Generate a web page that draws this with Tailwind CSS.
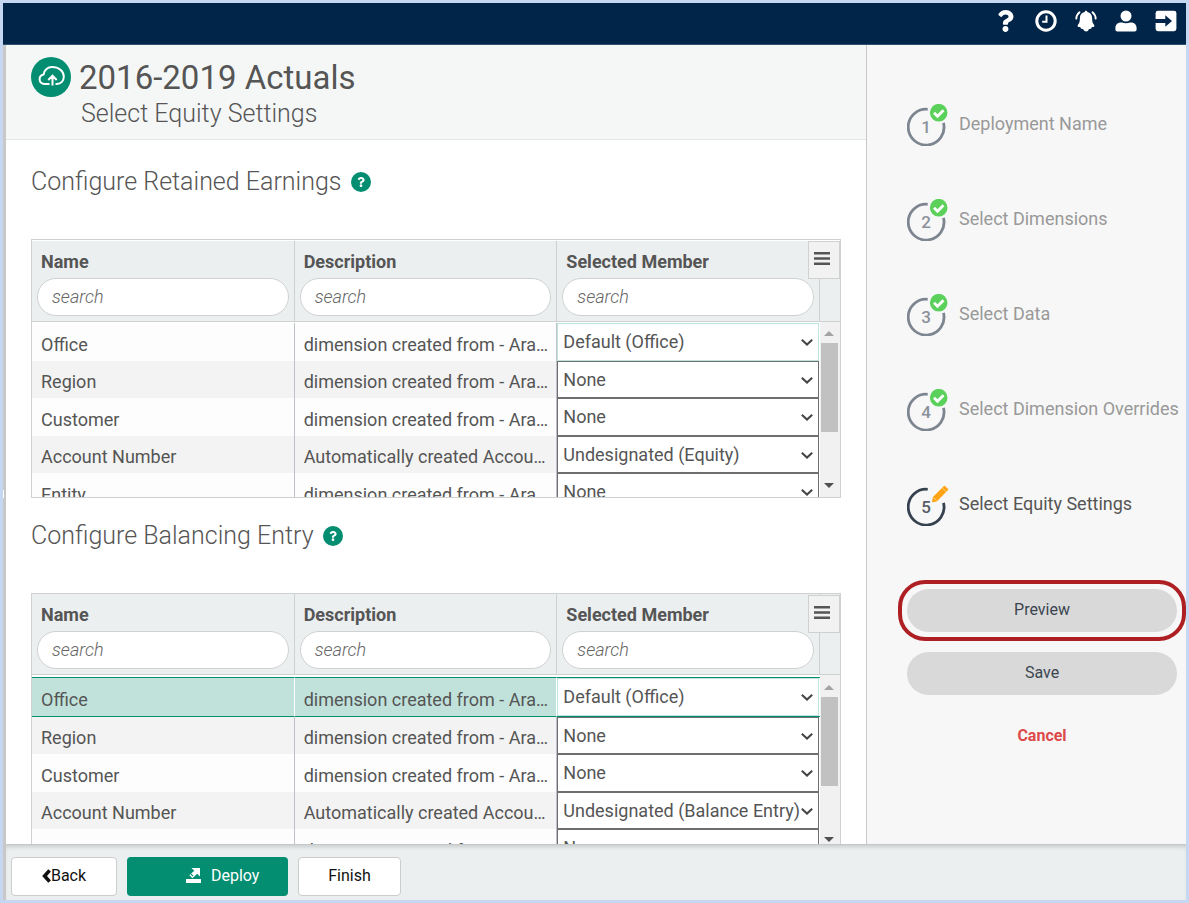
<!DOCTYPE html>
<html lang="en">
<head>
    <meta charset="UTF-8">
    <meta name="viewport" content="width=device-width, initial-scale=1.0">
    <title>2016-2019 Actuals - Select Equity Settings</title>
    <script src="https://cdn.jsdelivr.net/npm/@tailwindcss/browser@4"></script>
</head>
<body class="h-screen flex flex-col overflow-hidden border-3 border-[#c6d8f1] bg-white font-['Roboto',sans-serif] text-[#555]">
    <header class="h-[42px] shrink-0 flex items-center justify-end gap-[18px] pr-[9px] pb-1.5 bg-[#002548] border-b border-[#2f5170] text-white">
        <button type="button" aria-label="Help">
            <svg class="size-[22px]" viewBox="-52 0 512 512" fill="currentColor"><path d="M202.021 0C122.202 0 70.503 32.703 29.914 91.026c-7.363 10.58-5.093 25.086 5.178 32.874l43.138 32.709c10.373 7.865 25.132 6.026 33.253-4.148 25.049-31.381 43.63-49.449 82.757-49.449 30.764 0 68.816 19.799 68.816 49.631 0 22.552-18.617 34.134-48.993 51.164-35.423 19.86-82.299 44.576-82.299 106.405V320c0 13.255 10.745 24 24 24h72.471c13.255 0 24-10.745 24-24v-5.773c0-42.86 125.268-44.645 125.268-160.627C377.504 66.256 286.902 0 202.021 0zM192 373.459c-38.196 0-69.271 31.075-69.271 69.271 0 38.195 31.075 69.27 69.271 69.27s69.271-31.075 69.271-69.271-31.075-69.27-69.271-69.27z"/></svg>
        </button>
        <button type="button" aria-label="History">
            <svg class="size-[22px]" viewBox="0 0 22 22" fill="none" stroke="currentColor"><circle cx="11" cy="11" r="9.2" stroke-width="3"/><path d="M11.500 5.500v6.200H7.200" stroke-width="2"/></svg>
        </button>
        <button type="button" aria-label="Notifications">
            <svg class="size-[22px]" viewBox="0 0 22 22" fill="currentColor"><path d="M11 .8c.8 0 1.300.5 1.300 1.200 3 .6 4.800 2.700 4.800 5.900 0 3.600.6 5.300 1.800 6.500 1 1.100.4 2.700-1 2.700h-1c-.2 1.200-1 2-2.200 1.900h-.8c-.2 1.500-1.300 2.500-2.700 2.500s-2.800-1-3-2.500h-.8c-1.200.1-1.900-.7-2.100-1.900h-1.200c-1.400 0-2-1.600-1-2.700 1.200-1.200 1.800-2.900 1.800-6.500 0-3.200 1.800-5.300 4.800-5.900 0-.7.5-1.200 1.300-1.200z"/><path d="M4.500 2.300C2.500 4 1.400 6 1.300 8.600M17.500 2.300c2 1.700 3.100 3.700 3.200 6.300" fill="none" stroke="currentColor" stroke-width="1.900" stroke-linecap="round"/></svg>
        </button>
        <button type="button" aria-label="Account">
            <svg class="size-[22px]" viewBox="0 0 22 22" fill="currentColor"><circle cx="11" cy="6" r="5.500"/><path d="M.4 19.500v-1.600c0-3.200 2.400-5.400 5.600-5.400h1c2.500 1.100 5.500 1.100 8 0h1c3.200 0 5.600 2.200 5.600 5.400v1.600c0 1.200-.8 2-2 2H2.400c-1.200 0-2-.8-2-2z"/></svg>
        </button>
        <button type="button" aria-label="Sign out">
            <svg class="size-[22px]" viewBox="0 0 22 22"><rect x=".6" y=".8" width="20.800" height="20.400" rx="2.400" fill="currentColor"/><path d="M0 8.900h10.300V5.300L17 11l-6.700 5.700v-3.600H0z" fill="#002548"/></svg>
        </button>
    </header>

    <div class="flex-1 min-h-0 flex">
        <div class="w-[3px] shrink-0 bg-[#c8c8c8]"><div class="mt-[445px] w-px h-2 bg-white"></div></div>
        <div class="flex-1 min-w-0 flex flex-col">
            <div class="flex-1 min-h-0 flex">
                <main class="flex-1 min-w-0 overflow-hidden">
                    <div class="h-[95px] flex gap-2 pl-[25px] pt-3 bg-[#f5f7f7] border-b border-[#e4e6e6]">
                        <svg class="size-10 shrink-0" viewBox="0 0 40 40"><circle cx="20" cy="20" r="20" fill="#038d71"/><path d="M18.500 27h-4.300c-3.300 0-5.600-2-5.600-4.800 0-2.500 1.600-4.200 4-4.700.3-4.300 3.900-7.500 8.400-7.500 6.800 0 11.800 4 11.800 9.500 0 4.500-2.800 7.500-7 7.500h-1.300M21.500 28.500V18.800M17.300 23l4.200-4.300 4.200 4.300" fill="none" stroke="#fff" stroke-width="2"/></svg>
                        <div>
                            <h1 class="text-[33px] leading-[42px]">2016-2019 Actuals</h1>
                            <h2 class="pl-[2px] text-[25px] leading-[30px] font-light">Select Equity Settings</h2>
                        </div>
                    </div>
                    <div id="sections" class="px-[25px]"></div>
                </main>

                <aside class="w-[320px] shrink-0 border-l border-[#c8c8c8] bg-[#f7f7f7] pl-10 pr-[9px] pt-[59px]">
                    <ol id="steps" class="flex flex-col gap-[53px] text-[18px] leading-6"></ol>
                    <div class="-mx-[9px] mt-[54px] border-4 border-[#ae1f24] rounded-[27px] p-[5px]">
                        <button type="button" class="block w-full h-[43px] pb-0.5 rounded-full bg-[#d9d9d9] text-[16px] text-[#3b4550]">Preview</button>
                    </div>
                    <button type="button" class="mt-[11px] block w-full h-[43px] pb-0.5 rounded-full bg-[#d9d9d9] text-[16px] text-[#3b4550]">Save</button>
                    <button type="button" class="mt-5 block w-full h-[43px] pb-0.5 text-[16px] font-bold text-[#dd4a4a]">Cancel</button>
                </aside>
            </div>

            <footer class="h-14 shrink-0 flex items-start gap-2.5 pl-[5px] pt-3 bg-[#ebefef] border-t border-[#c4c8c8] shadow-[inset_0_4px_4px_-2px_#c9cdcd] text-[16px] text-[#111]">
                <button type="button" class="h-[39px] w-[106px] pb-0.5 flex items-center justify-center bg-white border border-[#ccc] rounded">
                    <svg class="w-[9px] h-3.5" viewBox="0 0 9 14" fill="none" stroke="currentColor" stroke-width="3.600"><path d="M7.600 1.400 2.600 7l5 5.600"/></svg>Back
                </button>
                <button type="button" class="h-[39px] w-[161px] pb-0.5 flex items-center gap-2.5 pl-[59px] bg-[#038d71] rounded text-white">
                    <svg class="size-[15px]" viewBox="0 0 15 15" fill="currentColor"><path d="M5.500 0H14v8.500l-2.800-2.800-4.800 4.500-3-3L8.300 2.800z"/><path d="M5 6.200l2 2" stroke="#038d71" stroke-width="1.200"/><path d="M0 11h15v4H0z"/></svg>
                    Deploy
                </button>
                <button type="button" class="h-[39px] w-[103px] pb-0.5 bg-white border border-[#ccc] rounded">Finish</button>
            </footer>
        </div>
    </div>

    <script>
        const created = 'dimension created from - Aras Sales Data';
        const sections = [
            {
                id: 'retained', title: 'Configure Retained Earnings', selected: false,
                rows: [
                    ['Office', created, 'Default (Office)'],
                    ['Region', created, 'None'],
                    ['Customer', created, 'None'],
                    ['Account Number', 'Automatically created Account dimension', 'Undesignated (Equity)'],
                    ['Entity', created, 'None']
                ]
            },
            {
                id: 'balancing', title: 'Configure Balancing Entry', selected: true,
                rows: [
                    ['Office', created, 'Default (Office)'],
                    ['Region', created, 'None'],
                    ['Customer', created, 'None'],
                    ['Account Number', 'Automatically created Account dimension', 'Undesignated (Balance Entry)'],
                    ['Entity', created, 'None']
                ]
            }
        ];

        function headCell(id, label) {
            const inputId = id + '-' + label.replace(' ', '-').toLowerCase();
            return `
                <th class="h-[81px] p-0 pl-[5px] pr-[5px] pt-[9px] align-top text-left font-normal bg-[#ebeff0] border-r border-b border-[#cfd1d1]">
                    <label for="${inputId}" class="block pl-1 leading-6 font-bold">${label}</label>
                    <input id="${inputId}" type="text" placeholder="search" class="mt-1 block w-full h-[38px] px-3.5 pb-0.5 rounded-full border border-[#d0d2d2] bg-white font-light italic placeholder:text-[#666]">
                </th>`;
        }

        function bodyRow(section, row, i) {
            const on = section.selected && i === 0;
            const bg = on ? 'bg-[#c0e2db] border-y border-r border-r-white border-y-[#038d71]'
                : i % 2 ? 'bg-[#f3f3f3] border-r border-[#bcc2c8]' : 'bg-[#fdfdfd] border-r border-[#bcc2c8]';
            const height = on ? 'h-10' : i % 2 ? 'h-[37px]' : 'h-[38px]';
            const cell = 'p-0 pl-[9px] pr-2 pt-[5px] truncate';
            const line = i === 0 ? 'border-[#bfe3dd]' : 'border-[#6e6e6e]';
            return `
                <tr class="${height}">
                    <td class="${cell} ${bg}">${row[0]}</td>
                    <td class="${cell} ${bg}">${row[1]}</td>
                    <td class="p-0 pr-px ${on ? 'border-y border-[#038d71]' : ''}">
                        <div class="relative">
                            <select aria-label="${row[0]} member" class="appearance-none block w-full ${i % 2 ? 'h-[37px]' : 'h-[38px]'} pl-[5px] pr-3 border ${line} bg-white text-[#555]"><option>${row[2]}</option></select>
                            <svg class="absolute right-1.5 top-4 w-3 h-[7px] pointer-events-none" viewBox="0 0 12 7" fill="none" stroke="#444" stroke-width="2"><path d="M.8.8 6 5.600 11.200.8"/></svg>
                        </div>
                    </td>
                    <td class="p-0 bg-[#f1f1f1]"></td>
                </tr>`;
        }

        document.getElementById('sections').innerHTML = sections.map(s => `
            <section class="${s.selected ? 'mt-[18px]' : 'mt-[22px]'}">
                <h3 class="flex items-center gap-[9px] h-10 text-[25px] font-light">${s.title}
                    <button type="button" aria-label="About ${s.title}" class="size-5 rounded-full bg-[#038d71] flex items-center justify-center text-white">
                        <svg class="h-2.5 w-2.5" viewBox="-64 0 512 512" fill="currentColor"><path d="M202.021 0C122.202 0 70.503 32.703 29.914 91.026c-7.363 10.58-5.093 25.086 5.178 32.874l43.138 32.709c10.373 7.865 25.132 6.026 33.253-4.148 25.049-31.381 43.63-49.449 82.757-49.449 30.764 0 68.816 19.799 68.816 49.631 0 22.552-18.617 34.134-48.993 51.164-35.423 19.86-82.299 44.576-82.299 106.405V320c0 13.255 10.745 24 24 24h72.471c13.255 0 24-10.745 24-24v-5.773c0-42.86 125.268-44.645 125.268-160.627C377.504 66.256 286.902 0 202.021 0zM192 373.459c-38.196 0-69.271 31.075-69.271 69.271 0 38.195 31.075 69.27 69.271 69.27s69.271-31.075 69.271-69.271-31.075-69.27-69.271-69.27z"/></svg>
                    </button>
                </h3>
                <div class="relative mt-[37px] h-[259px] overflow-hidden border border-[#cfd1d1] ${s.selected ? '' : 'pt-px'}">
                    <table class="w-full table-fixed border-separate border-spacing-0 text-[18px] leading-6">
                        <thead>
                            <tr>
                                ${headCell(s.id, 'Name')}${headCell(s.id, 'Description')}${headCell(s.id, 'Selected Member')}
                                <th class="w-5 p-0 bg-[#ebeff0] border-b border-[#cfd1d1]"></th>
                            </tr>
                            <tr class="${s.selected ? 'h-0.5' : 'h-px'}"><td colspan="3" class="p-0"></td><td class="p-0 bg-[#f1f1f1]"></td></tr>
                        </thead>
                        <tbody>${s.rows.map((r, i) => bodyRow(s, r, i)).join('')}</tbody>
                    </table>
                    <button type="button" aria-label="Table menu" class="absolute top-px right-0 w-8 h-[38px] pr-1 pb-1 flex items-center justify-center bg-[#f2f2f2] border border-[#cfd1d1]">
                        <svg class="w-4 h-[13px]" viewBox="0 0 16 13" fill="none" stroke="#555" stroke-width="2.400"><path d="M0 1.200h16M0 6.500h16M0 11.800h16"/></svg>
                    </button>
                    <!-- scrollbar -->
                    <div class="absolute top-[82px] bottom-0 right-0 w-5 pr-0.5 flex flex-col items-center pt-[9px] pb-[9px] bg-[#f1f1f1]">
                        <svg class="w-2.5 h-[5px] shrink-0" viewBox="0 0 10 5" fill="#a3a3a3"><path d="M0 5 5 0l5 5z"/></svg>
                        <div class="mt-[7px] w-[17px] h-[89px] bg-[#c1c1c1]"></div>
                        <svg class="mt-auto w-2.5 h-[5px] shrink-0" viewBox="0 0 10 5" fill="#505050"><path d="M0 0h10L5 5z"/></svg>
                    </div>
                </div>
            </section>`).join('');

        const check = '<circle cx="31.700" cy="8.700" r="8.800" fill="#5bd15b"/><path d="M27 8.700l3.500 3.500 6-6" fill="none" stroke="#fff" stroke-width="2.800"/>';
        const pencil = '<path d="M26.500 13.600 37.500 2.500l3 3-11 11.200-3.600.8z" fill="#ffa415" stroke="#ffa415" stroke-width="1.500" stroke-linejoin="round"/><path d="M35.200 3.800l3.800 3.800M26.600 13.600l3 3" stroke="#fbd08b" stroke-width=".9"/>';
        const steps = ['Deployment Name', 'Select Dimensions', 'Select Data', 'Select Dimension Overrides', 'Select Equity Settings'];

        document.getElementById('steps').innerHTML = steps.map((name, i) => {
            const current = i === steps.length - 1;
            return `
                <li class="h-[42px] flex gap-2.5 whitespace-nowrap ${current ? 'text-[#555]' : 'text-[#999]'}">
                    <svg class="w-[42px] h-[42px] shrink-0" viewBox="0 0 42 42">
                        <path d="M20.700 5.300A17.900 17.900 0 1 0 36.500 18.800" fill="none" stroke="${current ? '#364150' : '#7d8690'}" stroke-width="2.800"/>
                        <text x="19" y="29" text-anchor="middle" font-size="17" font-weight="500" fill="${current ? '#555c66' : '#8a919a'}">${i + 1}</text>
                        ${current ? pencil : check}
                    </svg>
                    <span class="pt-2">${name}</span>
                </li>`;
        }).join('');
    </script>
</body>
</html>
